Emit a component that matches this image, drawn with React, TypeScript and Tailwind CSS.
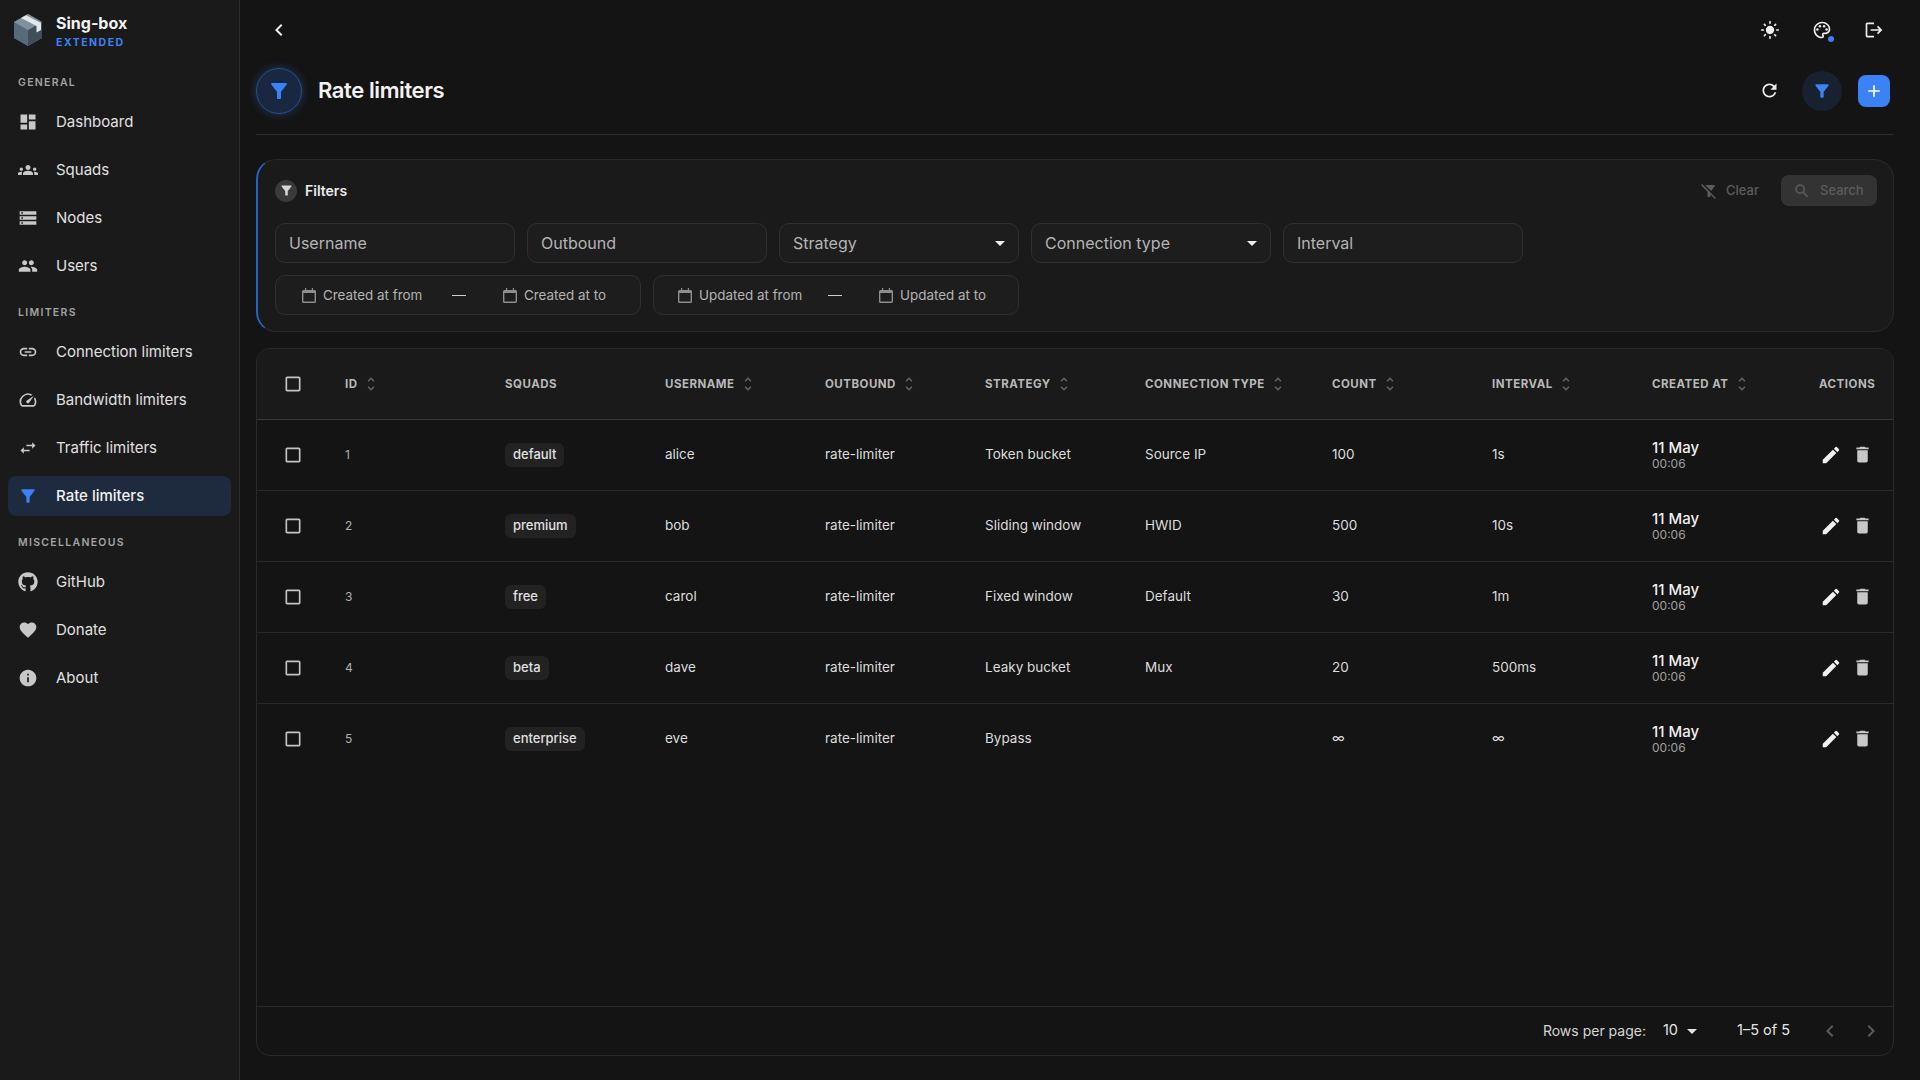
import {
  MdDashboard,
  MdGroups,
  MdStorage,
  MdPeople,
  MdLink,
  MdSpeed,
  MdSwapHoriz,
  MdFilterAlt,
  MdFilterAltOff,
  MdFavorite,
  MdInfo,
  MdLightMode,
  MdOutlinePalette,
  MdLogout,
  MdRefresh,
  MdAdd,
  MdSearch,
  MdEdit,
  MdDelete,
  MdCheckBoxOutlineBlank,
  MdChevronLeft,
  MdChevronRight,
  MdArrowDropDown,
  MdUnfoldMore,
} from "react-icons/md";
import { FaGithub } from "react-icons/fa";
import type { IconType } from "react-icons";

const navGroups: { label: string; items: { name: string; icon: IconType; active?: boolean }[] }[] = [
  {
    label: "GENERAL",
    items: [
      { name: "Dashboard", icon: MdDashboard },
      { name: "Squads", icon: MdGroups },
      { name: "Nodes", icon: MdStorage },
      { name: "Users", icon: MdPeople },
    ],
  },
  {
    label: "LIMITERS",
    items: [
      { name: "Connection limiters", icon: MdLink },
      { name: "Bandwidth limiters", icon: MdSpeed },
      { name: "Traffic limiters", icon: MdSwapHoriz },
      { name: "Rate limiters", icon: MdFilterAlt, active: true },
    ],
  },
  {
    label: "MISCELLANEOUS",
    items: [
      { name: "GitHub", icon: FaGithub },
      { name: "Donate", icon: MdFavorite },
      { name: "About", icon: MdInfo },
    ],
  },
];

const rows = [
  { id: 1, squad: "default", user: "alice", strategy: "Token bucket", conn: "Source IP", count: "100", interval: "1s" },
  { id: 2, squad: "premium", user: "bob", strategy: "Sliding window", conn: "HWID", count: "500", interval: "10s" },
  { id: 3, squad: "free", user: "carol", strategy: "Fixed window", conn: "Default", count: "30", interval: "1m" },
  { id: 4, squad: "beta", user: "dave", strategy: "Leaky bucket", conn: "Mux", count: "20", interval: "500ms" },
  { id: 5, squad: "enterprise", user: "eve", strategy: "Bypass", conn: "", count: "∞", interval: "∞" },
];

const columns = [
  { label: "ID", sort: true },
  { label: "SQUADS", sort: false },
  { label: "USERNAME", sort: true },
  { label: "OUTBOUND", sort: true },
  { label: "STRATEGY", sort: true },
  { label: "CONNECTION TYPE", sort: true },
  { label: "COUNT", sort: true },
  { label: "INTERVAL", sort: true },
  { label: "CREATED AT", sort: true },
];

const gridCols = "grid grid-cols-[72px_160px_160px_160px_160px_160px_187px_160px_160px_164px_1fr]";

function Logo() {
  return (
    <svg width="32" height="34" viewBox="0 0 32 34" className="shrink-0">
      <path d="M16 1 L30 9 L30 25 L16 33 L2 25 L2 9 Z" fill="#5d7080" />
      <path d="M16 17 L30 9 L30 25 L16 33 Z" fill="#3f4e5a" />
      <path d="M2 9 L16 17 L16 33 L2 25 Z" fill="#566a79" />
      <path d="M16 1 L30 9 L16 17 L2 9 Z" fill="#7f919e" />
      <path d="M9 5 L14 2.2 L29 10 L29 17 L24.5 19.5 L24.5 13 Z" fill="#e4e6e8" />
    </svg>
  );
}

function CalendarIcon() {
  return (
    <svg width="14" height="15" viewBox="0 0 14 15" className="shrink-0 text-[#8e8e8e]" fill="currentColor">
      <path d="M3 0h1.2v2H9.8V0H11v2h1.5A1.5 1.5 0 0 1 14 3.5v10a1.5 1.5 0 0 1-1.5 1.5h-11A1.5 1.5 0 0 1 0 13.5v-10A1.5 1.5 0 0 1 1.5 2H3V0Zm-1.6 5v8.6h11.2V5H1.4Z" />
    </svg>
  );
}

function Sidebar() {
  return (
    <aside className="w-[240px] shrink-0 h-full bg-[#1a1a1a] border-r border-[#2c2c2c] flex flex-col">
      <div className="h-[56px] flex items-start pl-[12px] pt-[13px] gap-[12px]">
        <Logo />
        <div className="flex flex-col">
          <span className="text-[16px] leading-[20px] font-bold text-[#f2f2f2]">Sing-box</span>
          <span className="mt-[3px] text-[10.5px] leading-[14px] font-bold text-[#3b82f6] tracking-[1.5px]">EXTENDED</span>
        </div>
      </div>
      {navGroups.map((group) => (
        <div key={group.label} className="flex flex-col">
          <div className="h-[46px] pt-[8px] flex items-center pl-[18px] text-[10.5px] font-semibold tracking-[1.3px] text-[#a3a3a3]">
            {group.label}
          </div>
          <div className="flex flex-col gap-[8px] px-[8px]">
            {group.items.map((item) => (
              <div
                key={item.name}
                className={`h-[40px] flex items-center rounded-[8px] pl-[10px] gap-[18px] text-[15px] ${
                  item.active ? "bg-[#1e2a3e] text-[#f2f2f2] font-medium" : "text-[#e0e0e0]"
                }`}
              >
                <item.icon size={20} className={item.active ? "text-[#3b82f6]" : "text-[#c8c8c8]"} />
                <span>{item.name}</span>
              </div>
            ))}
          </div>
        </div>
      ))}
    </aside>
  );
}

function TextField({ label, select }: { label: string; select?: boolean }) {
  return (
    <div className="w-[240px] h-[40px] rounded-[10px] border border-[#303030] bg-[#1d1d1d] flex items-center justify-between pl-[13px] pr-[6px] text-[16px] text-[#b4b4b4]">
      <span>{label}</span>
      {select && <MdArrowDropDown size={24} className="text-[#ededed]" />}
    </div>
  );
}

function DateRange({ from, to }: { from: string; to: string }) {
  return (
    <div className="w-[366px] h-[40px] rounded-[10px] border border-[#303030] bg-[#1d1d1d] flex items-center justify-center pr-[8px] text-[13.4px] text-[#b4b4b4]">
      <CalendarIcon />
      <span className="ml-[7px] w-[100px] whitespace-nowrap">{from}</span>
      <span className="ml-[29px] w-[14px] h-px shrink-0 bg-[#d0d0d0]" />
      <span className="ml-[37px]">
        <CalendarIcon />
      </span>
      <span className="ml-[7px] whitespace-nowrap">{to}</span>
    </div>
  );
}

function Filters() {
  return (
    <section className="mt-[24px] h-[173px] rounded-[20px] border border-[#2a2a2a] border-l-2 border-l-[#2563c4] bg-[#1a1a1a] px-[17px] flex flex-col">
      <div className="h-[61px] shrink-0 flex items-center justify-between">
        <div className="flex items-center gap-[8px]">
          <span className="w-[22px] h-[22px] rounded-full bg-[#3a3a3a] flex items-center justify-center">
            <MdFilterAlt size={15} className="text-[#d8d8d8]" />
          </span>
          <span className="text-[14px] font-semibold text-[#ececec]">Filters</span>
        </div>
        <div className="flex items-center gap-[22px] text-[13px] font-medium text-[#5c5c5c] mr-[-1px]">
          <div className="flex items-center gap-[8px]">
            <MdFilterAltOff size={18} />
            <span>Clear</span>
          </div>
          <div className="w-[96px] h-[31px] rounded-[8px] bg-[#333333] flex items-center pl-[12px] gap-[9px]">
            <MdSearch size={18} />
            <span>Search</span>
          </div>
        </div>
      </div>
      <div className="flex gap-[12px] mt-[2px]">
        <TextField label="Username" />
        <TextField label="Outbound" />
        <TextField label="Strategy" select />
        <TextField label="Connection type" select />
        <TextField label="Interval" />
      </div>
      <div className="flex gap-[12px] mt-[12px]">
        <DateRange from="Created at from" to="Created at to" />
        <DateRange from="Updated at from" to="Updated at to" />
      </div>
    </section>
  );
}

function Table() {
  return (
    <section className="mt-[16px] h-[708px] rounded-[14px] border border-[#2a2a2a] bg-[#141414] flex flex-col overflow-hidden">
      <div className={`${gridCols} h-[71px] shrink-0 bg-[#1a1a1a] border-b border-[#3a3a3a] items-center`}>
        <div className="pl-[26px]">
          <MdCheckBoxOutlineBlank size={20} className="text-[#c4c4c4]" />
        </div>
        {columns.map((col) => (
          <div key={col.label} className="pl-[16px] flex items-center gap-[4px] text-[11.5px] font-bold tracking-[0.5px] text-[#b8b8b8] whitespace-nowrap">
            <span className="pt-[2px]">{col.label}</span>
            {col.sort && <MdUnfoldMore size={18} className="text-[#666666]" />}
          </div>
        ))}
        <div className="pl-[19px] pt-[2px] h-full flex items-center text-[11.5px] font-bold tracking-[0.5px] text-[#b8b8b8]">ACTIONS</div>
      </div>
      {rows.map((row, i) => (
        <div
          key={row.id}
          className={`${gridCols} h-[71px] shrink-0 items-center border-b text-[13.5px] text-[#dcdcdc] ${
            i < rows.length - 1 ? "border-[#2a2a2a]" : "border-transparent"
          }`}
        >
          <div className="pl-[26px]">
            <MdCheckBoxOutlineBlank size={20} className="text-[#c4c4c4]" />
          </div>
          <div className="pl-[16px] text-[12px] text-[#b0b0b0]">{row.id}</div>
          <div className="pl-[16px]">
            <span className="inline-flex h-[24px] items-center rounded-[6px] bg-[#222222] px-[8px] text-[13px] font-medium text-[#e0e0e0]">{row.squad}</span>
          </div>
          <div className="pl-[16px] pb-[2px]">{row.user}</div>
          <div className="pl-[16px] pb-[2px]">rate-limiter</div>
          <div className="pl-[16px] pb-[2px]">{row.strategy}</div>
          <div className="pl-[16px] pb-[2px]">{row.conn}</div>
          <div className="pl-[16px] pb-[2px]">{row.count}</div>
          <div className="pl-[16px] pb-[2px]">{row.interval}</div>
          <div className="pl-[16px] flex flex-col">
            <span className="text-[15px] leading-[17px] font-medium text-[#f0f0f0]">11 May</span>
            <span className="text-[12px] leading-[16px] text-[#a0a0a0]">00:06</span>
          </div>
          <div className="pl-[20px] flex items-center gap-[10px]">
            <MdEdit size={22} className="text-[#f0f0f0]" />
            <MdDelete size={21} className="text-[#c8c8c8] mb-[1px]" />
          </div>
        </div>
      ))}
      <div className="flex-1" />
      <div className="h-[49px] shrink-0 border-t border-[#2a2a2a] flex items-center justify-end text-[14px] text-[#d4d4d4] pr-[10px]">
        <span className="pb-[2px]">Rows per page:</span>
        <span className="ml-[17px] mr-[2px] pb-[2px] text-[14.5px] text-[#e4e4e4]">10</span>
        <MdArrowDropDown size={24} className="text-[#e4e4e4]" />
        <span className="ml-[33px] pb-[2px] text-[14.5px] text-[#e4e4e4]">1–5 of 5</span>
        <MdChevronLeft size={24} className="ml-[28px] text-[#5a5a5a]" />
        <MdChevronRight size={24} className="ml-[17px] text-[#5a5a5a]" />
      </div>
    </section>
  );
}

export default function App() {
  return (
    <div className="flex w-[1920px] h-[1080px] overflow-hidden bg-[#141414] font-['Inter',sans-serif]">
      <Sidebar />
      <main className="flex-1 min-w-0 pl-[16px] pr-[26px] flex flex-col">
        <header className="h-[60px] shrink-0 flex items-center justify-between text-[#ededed]">
          <MdChevronLeft size={24} className="ml-[11px]" />
          <div className="flex items-center gap-[28px] mr-[8px]">
            <span className="w-[24px] flex justify-center">
              <MdLightMode size={20} />
            </span>
            <div className="relative w-[24px] h-[24px] flex items-center justify-center">
              <MdOutlinePalette size={20} />
              <span className="absolute right-0 bottom-0 w-[6px] h-[6px] rounded-full bg-[#3b82f6]" />
            </div>
            <span className="w-[24px] flex justify-center">
              <MdLogout size={20} />
            </span>
          </div>
        </header>
        <div className="h-[75px] shrink-0 border-b border-[#2c2c2c] flex items-center justify-between pb-[13px]">
          <div className="flex items-center gap-[16px]">
            <span className="w-[46px] h-[46px] rounded-full bg-[#1a2740] border border-[#23528f] shadow-[0_0_10px_rgba(59,130,246,0.35)] flex items-center justify-center">
              <MdFilterAlt size={24} className="text-[#3b82f6]" />
            </span>
            <h1 className="text-[22px] font-semibold tracking-[-0.4px] text-[#f2f2f2]">Rate limiters</h1>
          </div>
          <div className="flex items-center">
            <MdRefresh size={21} className="text-[#ededed]" />
            <span className="ml-[22px] w-[40px] h-[40px] rounded-full bg-[#17212f] flex items-center justify-center">
              <MdFilterAlt size={20} className="text-[#3b82f6]" />
            </span>
            <span className="ml-[16px] mr-[4px] w-[32px] h-[32px] rounded-[8px] bg-[#3b82f6] flex items-center justify-center">
              <MdAdd size={20} className="text-white" />
            </span>
          </div>
        </div>
        <Filters />
        <Table />
      </main>
    </div>
  );
}
